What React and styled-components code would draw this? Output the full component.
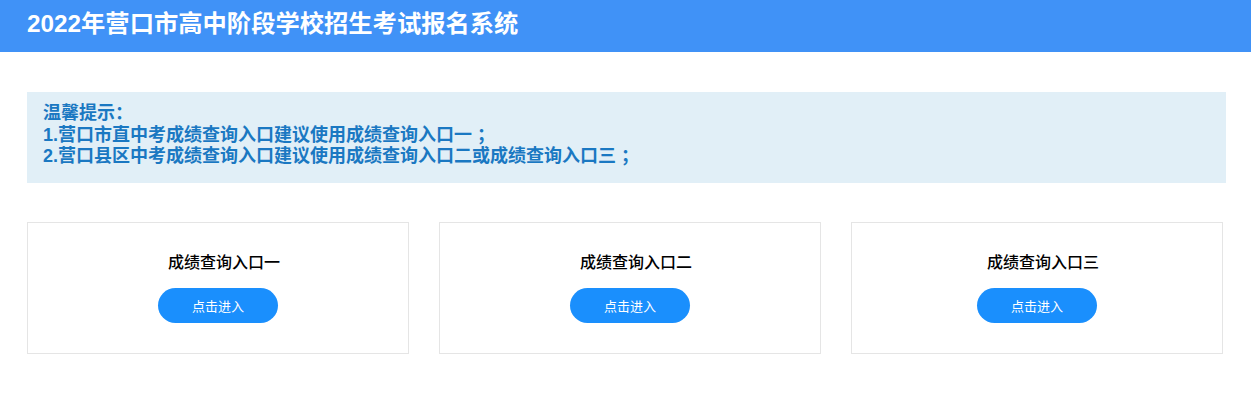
import React from 'react';
import styled, { createGlobalStyle } from 'styled-components';

const entries = ['成绩查询入口一', '成绩查询入口二', '成绩查询入口三'];

export default function App() {
  return (
    <Page>
      <GlobalStyle />
      <Header>
        <Title>2022年营口市高中阶段学校招生考试报名系统</Title>
      </Header>
      <Main>
        <Notice>
          <p>温馨提示：</p>
          <p>1.营口市直中考成绩查询入口建议使用成绩查询入口一 ；</p>
          <p>2.营口县区中考成绩查询入口建议使用成绩查询入口二或成绩查询入口三 ；</p>
        </Notice>
        <Cards>
          {entries.map((name, i) => (
            <Card key={name} narrow={i === 2}>
              <CardTitle>{name}</CardTitle>
              <EnterButton>点击进入</EnterButton>
            </Card>
          ))}
        </Cards>
      </Main>
    </Page>
  );
}

const GlobalStyle = createGlobalStyle`
  body {
    margin: 0;
    background: #fff;
    font-family: "Noto Sans CJK SC", "Noto Sans", sans-serif;
  }
`;

const Page = styled.div`
  width: 1251px;
`;

const Header = styled.header`
  height: 52px;
  background: #4092f7;
  display: flex;
  align-items: center;
  padding-left: 27px;
  padding-bottom: 3px;
  box-sizing: border-box;
`;

const Title = styled.h1`
  margin: 0;
  color: #fff;
  font-size: 24.3px;
  font-weight: bold;
  line-height: 1;
  font-family: "Liberation Sans", "Noto Sans CJK SC", sans-serif;
`;

const Main = styled.main`
  padding: 40px 25px 0 27px;
`;

const Notice = styled.div`
  background: #e1eff7;
  padding: 11px 16px 15px;
  color: #1a78c2;
  font-size: 18px;
  font-weight: bold;
  font-family: "Liberation Sans", "Noto Sans CJK SC", sans-serif;
  p {
    margin: 0;
    line-height: 21.5px;
  }
`;

const Cards = styled.div`
  display: flex;
  gap: 30px;
  margin-top: 39px;
`;

const Card = styled.div`
  width: ${p => (p.narrow ? '372px' : '382px')};
  height: 132px;
  box-sizing: border-box;
  border: 1px solid #e5e5e5;
  display: flex;
  flex-direction: column;
  align-items: center;
  padding-top: 27px;
`;

const CardTitle = styled.div`
  font-size: 16px;
  font-weight: 500;
  color: #000;
  line-height: 22px;
  padding-left: 12px;
`;

const EnterButton = styled.button`
  margin-top: 16px;
  width: 120px;
  height: 35px;
  border: 0;
  border-radius: 18px;
  background: #1a8ffd;
  color: #fff;
  font-size: 13px;
  font-family: "Noto Sans CJK SC", sans-serif;
  cursor: pointer;
`;
